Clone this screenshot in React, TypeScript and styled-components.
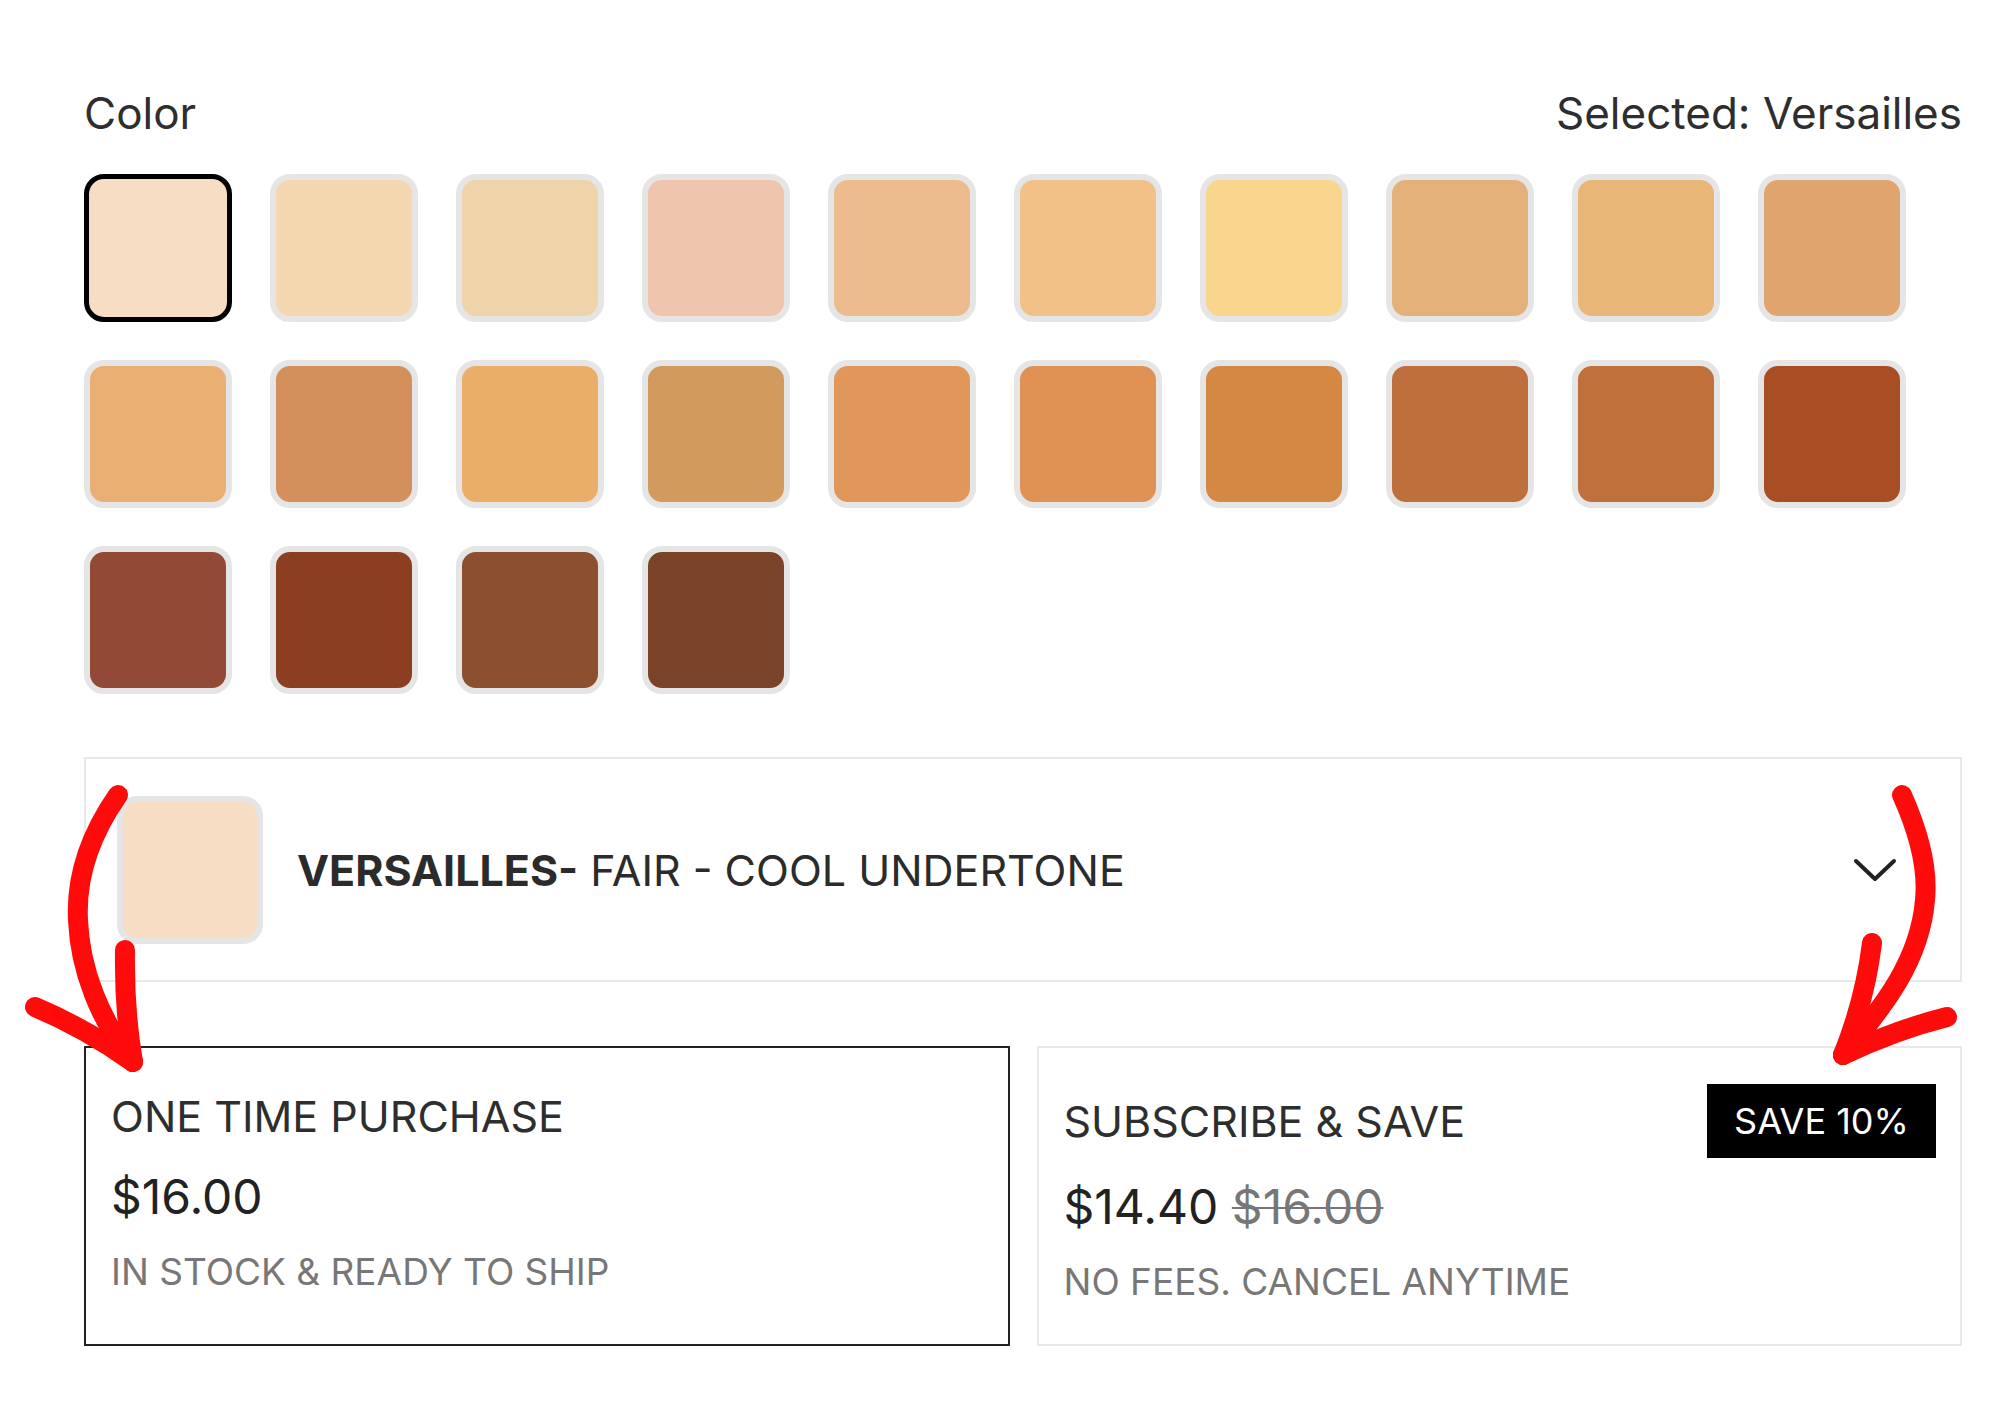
import React from 'react'
import styled, { createGlobalStyle } from 'styled-components'

const GlobalStyle = createGlobalStyle`
  body {
    margin: 0;
    background: #fff;
    font-family: Inter, "Liberation Sans", sans-serif;
  }
`

const shades = [
  '#f6ddc4', '#f4d7ae', '#f0d4a9', '#f0c5ad', '#ecbc8e', '#f2c188', '#f9d58e', '#e4b07a', '#e8b676', '#e0a56e',
  '#eaaf73', '#d3905c', '#eaae68', '#d39a5e', '#e2975a', '#e09254', '#d48844', '#be6f3b', '#c0703a', '#a94e24',
  '#924a36', '#8b3e20', '#8c4f2f', '#7b4429',
]

const App = () => {
  return (
    <Page>
      <GlobalStyle />
      <HeaderRow>
        <span>Color</span>
        <span>Selected: Versailles</span>
      </HeaderRow>

      <SwatchGrid>
        {shades.map((c, i) => (
          <Swatch key={c + i} $color={c} $selected={i === 0} />
        ))}
      </SwatchGrid>

      <Accordion>
        <ShadeChip $color={shades[0]} />
        <ShadeName>
          <strong>VERSAILLES</strong>
          <strong>-</strong> FAIR - COOL UNDERTONE
        </ShadeName>
        <svg width="44" height="24" viewBox="0 0 44 24" fill="none">
          <polyline points="3,3 22,21 41,3" stroke="#222" strokeWidth="4" strokeLinecap="round" strokeLinejoin="round" />
        </svg>
      </Accordion>

      <PurchaseGrid>
        <Card $active>
          <CardHead>
            <CardTitle>ONE TIME PURCHASE</CardTitle>
          </CardHead>
          <Price>$16.00</Price>
          <Note>IN STOCK &amp; READY TO SHIP</Note>
        </Card>
        <Card>
          <CardHead>
            <CardTitle>SUBSCRIBE &amp; SAVE</CardTitle>
            <Badge>SAVE 10%</Badge>
          </CardHead>
          <Price>
            $14.40 <OldPrice>$16.00</OldPrice>
          </Price>
          <Note>NO FEES. CANCEL ANYTIME</Note>
        </Card>
      </PurchaseGrid>

      {/* hand-drawn red arrows lying over the page */}
      <Arrows width="2000" height="1414" viewBox="0 0 2000 1414" fill="none">
        <g stroke="#ff0b0b" strokeWidth="20" strokeLinecap="round" strokeLinejoin="round">
          <path d="M118 795 C88 838, 76 880, 78 920 C80 970, 100 1020, 133 1062" />
          <path d="M35 1007 Q85 1028, 133 1062" />
          <path d="M125 950 Q124 1010, 133 1062" />
          <path d="M1902 795 C1920 835, 1928 870, 1925 900 C1920 960, 1885 1005, 1843 1055" />
          <path d="M1872 943 Q1865 1000, 1843 1055" />
          <path d="M1947 1017 Q1895 1030, 1843 1055" />
        </g>
      </Arrows>
    </Page>
  )
}

export default App

const Page = styled.div`
  position: relative;
  box-sizing: border-box;
  width: 2000px;
  min-height: 1414px;
  padding: 87px 38px 0 84px;
  color: #2e2e2e;
`

const HeaderRow = styled.div`
  display: flex;
  justify-content: space-between;
  font-size: 44px;
  line-height: 53px;
  color: #2e2e2e;
`

const SwatchGrid = styled.div`
  display: grid;
  grid-template-columns: repeat(10, 148px);
  gap: 38px;
  margin-top: 34px;
`

const Swatch = styled.div<{ $color: string; $selected?: boolean }>`
  box-sizing: border-box;
  width: 148px;
  height: 148px;
  border-radius: 20px;
  border: ${({ $selected }) => ($selected ? '5px solid #000' : '6px solid #e5e5e5')};
  background: ${({ $color }) => $color};
`

const Accordion = styled.div`
  display: flex;
  align-items: center;
  gap: 34px;
  margin-top: 63px;
  padding: 37px 63px 36px 31px;
  border: 2px solid #e8e8e8;
`

const ShadeChip = styled.div<{ $color: string }>`
  box-sizing: border-box;
  flex: none;
  width: 146px;
  height: 148px;
  border-radius: 20px;
  border: 6px solid #e5e5e5;
  background: ${({ $color }) => $color};
`

const ShadeName = styled.div`
  flex: 1;
  font-size: 43px;
  line-height: 52px;
  color: #2b2b2b;
  strong {
    font-weight: 700;
  }
`

const PurchaseGrid = styled.div`
  display: grid;
  grid-template-columns: 1fr 1fr;
  gap: 27px;
  margin-top: 64px;
`

const Card = styled.div<{ $active?: boolean }>`
  padding: 36px 24px 40px 25px;
  border: 2px solid ${({ $active }) => ($active ? '#222' : '#e8e8e8')};
`

const CardHead = styled.div`
  display: flex;
  align-items: center;
  justify-content: space-between;
  min-height: 64px;
`

const CardTitle = styled.div`
  font-size: 43px;
  line-height: 52px;
  color: #2e2e2e;
`

const Badge = styled.div`
  display: flex;
  align-items: center;
  justify-content: center;
  width: 229px;
  height: 74px;
  background: #000;
  color: #fff;
  font-size: 36px;
`

const Price = styled.div`
  margin-top: 21px;
  font-size: 48px;
  line-height: 56px;
  color: #222;
`

const OldPrice = styled.span`
  color: #777;
  text-decoration: line-through;
  text-decoration-thickness: 2px;
`

const Note = styled.div`
  margin-top: 25px;
  font-size: 37px;
  line-height: 44px;
  color: #777;
`

const Arrows = styled.svg`
  position: absolute;
  top: 0;
  left: 0;
  pointer-events: none;
`
